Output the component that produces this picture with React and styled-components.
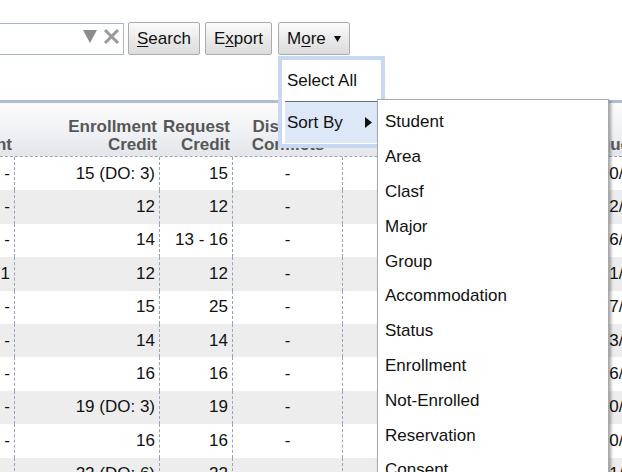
import React from 'react';
import styled, { createGlobalStyle } from 'styled-components';

const Global = createGlobalStyle`
  html, body { margin: 0; padding: 0; overflow: hidden; background: #fff; }
  body {
    width: 622px; height: 472px;
    font-family: "Liberation Sans", Arial, Helvetica, sans-serif;
    font-size: 17px; color: #111;
  }
`;

const Page = styled.div`
  margin-left: -100px;
  width: 800px;
`;

const Toolbar = styled.div`
  position: relative;
  z-index: 5;
  display: flex;
  align-items: flex-start;
  gap: 5px;
  padding-top: 22px;
  height: 33px;
`;

const SearchBox = styled.div`
  width: 224px;
  height: 32px;
  margin-top: 1px;
  margin-right: -1px;
  box-sizing: border-box;
  border: 1px solid #a6b5c9;
  background: #fff;
  display: flex;
  align-items: center;
  justify-content: flex-end;
  gap: 6px;
  padding: 0 3px 6px 0;
`;

const Button = styled.button`
  height: 33px;
  box-sizing: border-box;
  padding: 0 8px;
  border: 1px solid #ababab;
  border-radius: 2px;
  background: linear-gradient(#fbfbfb, #e9e9e9 55%, #dcdcdc);
  font-family: inherit;
  font-size: 17px;
  color: #111;
  display: flex;
  align-items: center;
  u { text-decoration: underline; text-underline-offset: 2px; }
`;

const MoreWrap = styled.div`
  position: relative;
  margin-left: 1px;
`;

const Menu = styled.div`
  position: absolute;
  top: calc(100% + 1px);
  left: 0;
  width: 107px;
  box-sizing: border-box;
  border: 4px solid #c8d8f2;
  padding: 0 3px 1px;
  background: #fff;
`;

const MenuItem = styled.div`
  position: relative;
  height: 41px;
  display: flex;
  align-items: center;
  justify-content: space-between;
  padding: 0 6px 0 2px;
  background: ${(p) => (p.$active ? '#dce7f8' : 'transparent')};
  color: #111;
  white-space: nowrap;
`;

const Separator = styled.div`
  height: 1px;
  background: #6e6e6e;
`;

const SubMenu = styled.div`
  position: absolute;
  left: calc(100% - 1px);
  top: -3px;
  width: 232px;
  height: 420px;
  box-sizing: border-box;
  border: 1px solid #a9a9a9;
  background: #fff;
  box-shadow: 2px 2px 3px rgba(0, 0, 0, 0.35);
  padding-top: 5px;
  overflow: hidden;
`;

const SubItem = styled.div`
  height: 34.8px;
  display: flex;
  align-items: center;
  padding-left: 7px;
  color: #111;
`;

const COLS = '115px 145px 73px 110px 233px 91px';

const Table = styled.div`
  margin-top: 45px;
  border-top: 3px solid #b1bdcf;
  width: 767px;
`;

const HeaderRow = styled.div`
  display: grid;
  grid-template-columns: ${COLS};
  height: 54px;
  box-sizing: border-box;
  background: linear-gradient(#fcfcfd, #eef0f3 60%, #e3e5ea);
  border-bottom: 1px dashed #98a2b8;
`;

const HeadCell = styled.div`
  display: flex;
  flex-direction: column;
  justify-content: flex-end;
  align-items: ${(p) => (p.$align === 'center' ? 'center' : 'flex-end')};
  text-align: ${(p) => p.$align || 'right'};
  padding: 0 3px 2px;
  font-weight: bold;
  font-size: 17px;
  line-height: 18px;
  color: #575757;
  white-space: nowrap;
  overflow: hidden;
`;

const Row = styled.div`
  display: grid;
  grid-template-columns: ${COLS};
  height: 33.4px;
  background: ${(p) => (p.$odd ? '#ededed' : '#fff')};
`;

const Cell = styled.div`
  display: flex;
  align-items: center;
  justify-content: ${(p) => (p.$align === 'center' ? 'center' : 'flex-end')};
  padding: 0 4px;
  border-right: 1px dashed #98a2b8;
  color: #111;
  white-space: nowrap;
  overflow: hidden;
`;

const FilterIcon = () => (
  <svg width="14" height="13" viewBox="0 0 14 13">
    <polygon points="0,0 14,0 7,13" fill="#8b8b8b" />
  </svg>
);

const ClearIcon = () => (
  <svg width="17" height="15" viewBox="0 0 17 15">
    <path d="M2 1 L15 14 M15 1 L2 14" stroke="#9a9a9a" strokeWidth="3" strokeLinecap="butt" />
  </svg>
);

const DownCaret = styled.svg`
  margin-left: 8px;
`;

const RightArrow = () => (
  <svg width="7" height="11" viewBox="0 0 7 11">
    <polygon points="0,0 7,5.5 0,11" fill="#111" />
  </svg>
);

const rows = [
  ['-', '15 (DO: 3)', '15', '-', '', '0/1'],
  ['-', '12', '12', '-', '', '2/3'],
  ['-', '14', '13 - 16', '-', '', '6/7'],
  ['1', '12', '12', '-', '', '1/2'],
  ['-', '15', '25', '-', '', '7/8'],
  ['-', '14', '14', '-', '', '3/4'],
  ['-', '16', '16', '-', '', '6/7'],
  ['-', '19 (DO: 3)', '19', '-', '', '0/1'],
  ['-', '16', '16', '-', '', '0/1'],
  ['-', '22 (DO: 6)', '22', '-', '', '1/2'],
  ['-', '12', '12', '-', '', '2/3'],
];

const aligns = ['right', 'right', 'right', 'center', 'center', 'center'];

const sortOptions = [
  'Student', 'Area', 'Clasf', 'Major', 'Group', 'Accommodation', 'Status',
  'Enrollment', 'Not-Enrolled', 'Reservation', 'Consent', 'Enrollment Credit',
];

export default function App() {
  return (
    <>
      <Global />
      <Page>
        <Toolbar>
          <SearchBox>
            <FilterIcon />
            <ClearIcon />
          </SearchBox>
          <Button><u>S</u>earch</Button>
          <Button>E<u>x</u>port</Button>
          <MoreWrap>
            <Button>
              M<u>o</u>re
              <DownCaret width="7" height="6" viewBox="0 0 7 6">
                <polygon points="0,0 7,0 3.5,6" fill="#111" />
              </DownCaret>
            </Button>
            <Menu>
              <MenuItem>Select All</MenuItem>
              <Separator />
              <MenuItem $active>
                Sort By
                <RightArrow />
                <SubMenu>
                  {sortOptions.map((o) => (
                    <SubItem key={o}>{o}</SubItem>
                  ))}
                </SubMenu>
              </MenuItem>
            </Menu>
          </MoreWrap>
        </Toolbar>
        <Table>
          <HeaderRow>
            <HeadCell>Consent</HeadCell>
            <HeadCell>
              <span>Enrollment</span>
              <span>Credit</span>
            </HeadCell>
            <HeadCell>
              <span>Request</span>
              <span>Credit</span>
            </HeadCell>
            <HeadCell $align="center">
              <span>Distance</span>
              <span>Conflicts</span>
            </HeadCell>
            <HeadCell $align="center" />
            <HeadCell $align="center">
              <span>Requested</span>
            </HeadCell>
          </HeaderRow>
          {rows.map((r, i) => (
            <Row key={i} $odd={i % 2 === 1}>
              {r.map((v, j) => (
                <Cell key={j} $align={aligns[j]}>{v}</Cell>
              ))}
            </Row>
          ))}
        </Table>
      </Page>
    </>
  );
}
